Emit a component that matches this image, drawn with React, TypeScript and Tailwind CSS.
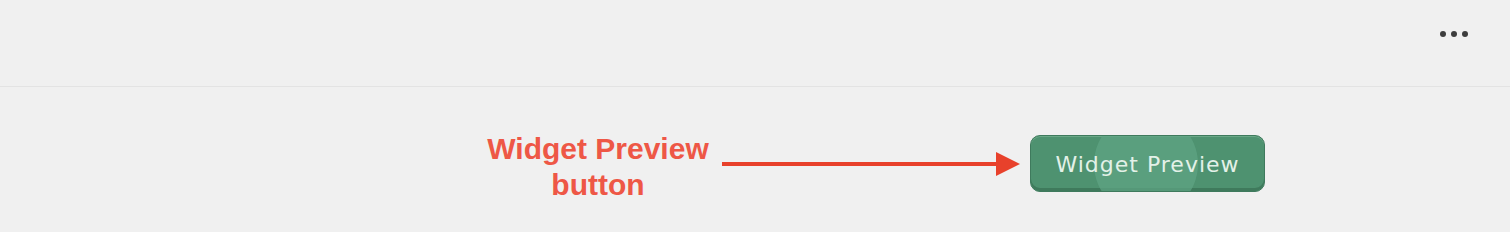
export default function App() {
  return (
    <div className="w-[1510px] h-[232px] bg-[#f0f0f0] flex flex-col">
      {/* Top bar */}
      <div className="shrink-0 h-[87px] border-b border-[#e3e3e3] flex items-start justify-end pr-[42px] pt-[31px]">
        <div className="flex gap-[5px]">
          <span className="w-[6px] h-[6px] rounded-full bg-[#3d3d3d]" />
          <span className="w-[6px] h-[6px] rounded-full bg-[#3d3d3d]" />
          <span className="w-[6px] h-[6px] rounded-full bg-[#3d3d3d]" />
        </div>
      </div>

      {/* Content */}
      <div className="flex items-center pl-[486px] pt-[36px]">
        <div
          className="shrink-0 w-[224px] mt-[8px] whitespace-nowrap text-center font-bold text-[30px] leading-[36px] text-[#ee5746]"
          style={{ fontFamily: '"Liberation Sans", Arial, sans-serif' }}
        >
          Widget Preview
          <br />
          button
        </div>

        <svg className="shrink-0 ml-[12px] mt-[2px]" width="298" height="26" viewBox="0 0 298 26">
          <line x1="0" y1="13" x2="276" y2="13" stroke="#e8412b" strokeWidth="4" />
          <polygon points="274,1 298,13 274,25" fill="#e8412b" />
        </svg>

        <button
          className="shrink-0 relative ml-[10px] w-[235px] h-[57px] rounded-[10px] overflow-hidden bg-[#4e9270] border border-[#3f7a5d] shadow-[inset_0_-3px_0_#3f7a5c,inset_0_1px_0_#6aa887] flex items-center justify-center"
        >
          <span className="absolute left-[63px] top-[-24px] w-[104px] h-[104px] rounded-full bg-[#5fa584]/70" />
          <span
            className="relative text-[22px] tracking-[1px] text-[#e3f1e8] pt-[3px]"
            style={{ fontFamily: '"DejaVu Sans", Verdana, sans-serif' }}
          >
            Widget Preview
          </span>
        </button>
      </div>
    </div>
  )
}
